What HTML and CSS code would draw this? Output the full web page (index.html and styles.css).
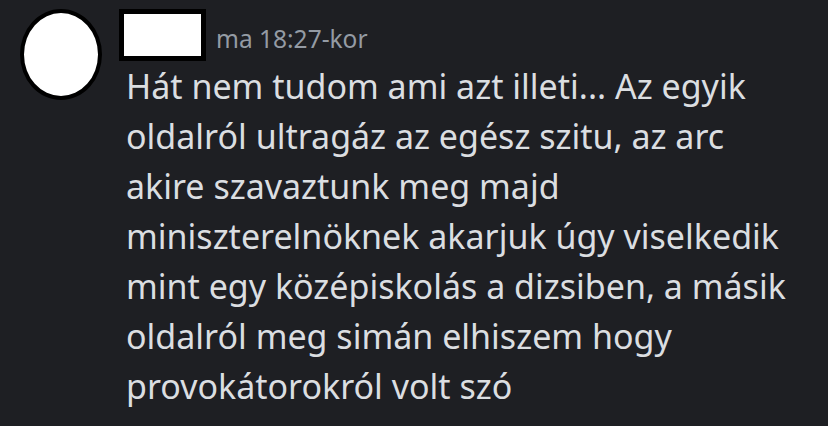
FILE: index.html
```html
<!DOCTYPE html>
<html>
<head>
    <title>Message</title>
    <link rel="stylesheet" href="styles.css">
</head>
<body>
    <div class="message">
        <div class="avatar"></div>
        <div class="content">
            <div class="header">
                <div class="name"></div>
                <span class="time">ma 18:27-kor</span>
            </div>
            <p class="text">Hát nem tudom ami azt illeti... Az egyik<br>
                oldalról ultragáz az egész szitu, az arc<br>
                akire szavaztunk meg majd<br>
                miniszterelnöknek akarjuk úgy viselkedik<br>
                mint egy középiskolás a dizsiben, a másik<br>
                oldalról meg simán elhiszem hogy<br>
                provokátorokról volt szó</p>
        </div>
    </div>
</body>
</html>
```

FILE: styles.css
```css
/* dark chat message */
body {
    margin: 0;
    padding: 0;
    background: #1e1f23;
    font-family: "Noto Sans", sans-serif;
    height: 426px;
    overflow: hidden;
}

.message {
    display: flex;
    align-items: flex-start;
    gap: 17px;
    padding: 9px 0 0 20px;
}

.avatar {
    width: 74px;
    height: 83px;
    border: 4px solid #000;
    border-radius: 50%;
    background: #fff;
    flex-shrink: 0;
}

.content {
    flex: 1;
}

.header {
    display: flex;
    align-items: flex-end;
    gap: 10px;
}

.name {
    width: 77px;
    height: 42px;
    border: 5px solid #000;
    background: #fff;
}

.time {
    color: #949ba4;
    font-size: 24.5px;
    line-height: 28px;
    margin-bottom: 8px;
}

.text {
    margin: 0;
    padding-left: 7px;
    white-space: nowrap;
    color: #dbdee1;
    font-size: 34px;
    line-height: 50px;
}
```
